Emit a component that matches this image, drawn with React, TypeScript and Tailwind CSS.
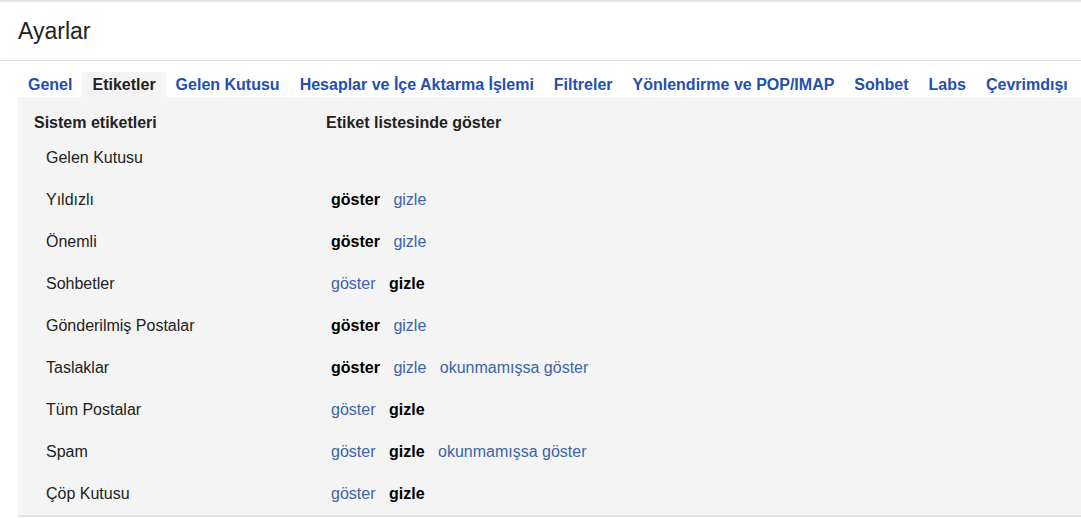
const tabs = [
  'Genel',
  'Etiketler',
  'Gelen Kutusu',
  'Hesaplar ve İçe Aktarma İşlemi',
  'Filtreler',
  'Yönlendirme ve POP/IMAP',
  'Sohbet',
  'Labs',
  'Çevrimdışı',
];

type Action = { text: string; active: boolean };

const show = (on: boolean): Action[] => [
  { text: 'göster', active: on },
  { text: 'gizle', active: !on },
];

const rows: { label: string; actions: Action[] }[] = [
  { label: 'Gelen Kutusu', actions: [] },
  { label: 'Yıldızlı', actions: show(true) },
  { label: 'Önemli', actions: show(true) },
  { label: 'Sohbetler', actions: show(false) },
  { label: 'Gönderilmiş Postalar', actions: show(true) },
  { label: 'Taslaklar', actions: [...show(true), { text: 'okunmamışsa göster', active: false }] },
  { label: 'Tüm Postalar', actions: show(false) },
  { label: 'Spam', actions: [...show(false), { text: 'okunmamışsa göster', active: false }] },
  { label: 'Çöp Kutusu', actions: show(false) },
];

export default function App() {
  return (
    <div
      className="w-[1081px] h-[518px] bg-white overflow-hidden text-[#222]"
      style={{ fontFamily: '"Liberation Sans", Arial, sans-serif' }}
    >
      <div className="border-t-2 border-[#e5e5e5] h-[60px] flex items-center pl-[18px]">
        <h1 className="text-[23px] leading-none text-[#222]">Ayarlar</h1>
      </div>
      <div className="border-t border-[#e3e3e3] pt-[11px] pl-[18px]">
        <div className="flex h-[25px]">
          {tabs.map((t) => (
            <div
              key={t}
              className={`px-[10px] text-[16px] font-bold leading-[25px] whitespace-nowrap ${
                t === 'Etiketler' ? 'bg-[#f4f4f4] text-[#222]' : 'text-[#2350b0]'
              }`}
            >
              {t}
            </div>
          ))}
        </div>
        <div className="bg-[#f4f4f4] pt-[12px] border-b-2 border-[#e2e2e2]">
          <div className="flex h-[28px] items-center pl-[16px] text-[16px] font-bold">
            <div className="w-[292px]">Sistem etiketleri</div>
            <div>Etiket listesinde göster</div>
          </div>
          {rows.map((r) => (
            <div key={r.label} className="flex h-[42px] items-center pl-[28px] text-[16px]">
              <div className="w-[285px]">{r.label}</div>
              <div className="flex gap-[13.5px]">
                {r.actions.map((a, i) => (
                  <span
                    key={i}
                    className={a.active ? 'font-bold text-black' : 'text-[#3d63a8]'}
                  >
                    {a.text}
                  </span>
                ))}
              </div>
            </div>
          ))}
        </div>
      </div>
    </div>
  );
}
